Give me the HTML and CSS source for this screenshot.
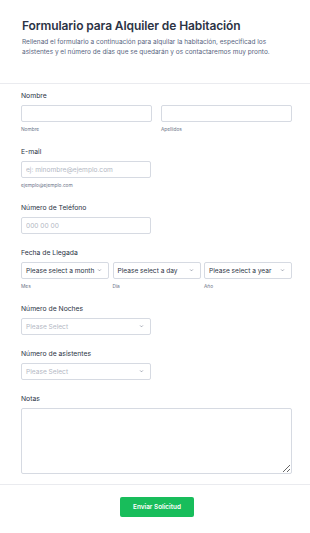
FILE: index.html
```html
<!DOCTYPE html>
<html>
  <head>
    <meta charset=utf-8>
    <title>Formulario para Alquiler de Habitación</title>
    <link rel="stylesheet" href="styles.css">
  </head>
  <body>
    <div id="form">
      <div class="header">
        <h1>Formulario para Alquiler de Habitación</h1>
        <p>Rellenad el formulario a continuación para alquilar la habitación, especificad los asistentes y el número de días que se quedarán y os contactaremos muy pronto.</p>
      </div>
      <div class="fields">
        <div class="field">
          <p class="label">Nombre</p>
          <div class="row">
            <div class="col">
              <input class="box" type="text">
              <p class="sub">Nombre</p>
            </div>
            <div class="col">
              <input class="box" type="text">
              <p class="sub">Apellidos</p>
            </div>
          </div>
        </div>
        <div class="field">
          <p class="label">E-mail</p>
          <div class="half">
            <input class="box" type="text" placeholder="ej: minombre@ejemplo.com">
            <p class="sub">ejemplo@ejemplo.com</p>
          </div>
        </div>
        <div class="field">
          <p class="label">Número de Teléfono</p>
          <div class="half">
            <input class="box" type="text" placeholder="000 00 00">
          </div>
        </div>
        <div class="field">
          <p class="label">Fecha de Llegada</p>
          <div class="row date">
            <div class="col">
              <div class="box select"><span>Please select a month</span><svg viewBox="0 0 10 6"><path d="M3 1.5l2 2 2-2"/></svg></div>
              <p class="sub">Mes</p>
            </div>
            <div class="col">
              <div class="box select"><span>Please select a day</span><svg viewBox="0 0 10 6"><path d="M3 1.5l2 2 2-2"/></svg></div>
              <p class="sub">Día</p>
            </div>
            <div class="col">
              <div class="box select"><span>Please select a year</span><svg viewBox="0 0 10 6"><path d="M3 1.5l2 2 2-2"/></svg></div>
              <p class="sub">Año</p>
            </div>
          </div>
        </div>
        <div class="field">
          <p class="label">Número de Noches</p>
          <div class="half">
            <div class="box select empty"><span>Please Select</span><svg viewBox="0 0 10 6"><path d="M3 1.5l2 2 2-2"/></svg></div>
          </div>
        </div>
        <div class="field">
          <p class="label">Número de asistentes</p>
          <div class="half">
            <div class="box select empty"><span>Please Select</span><svg viewBox="0 0 10 6"><path d="M3 1.5l2 2 2-2"/></svg></div>
          </div>
        </div>
        <div class="field last">
          <p class="label">Notas</p>
          <textarea class="notes"></textarea>
        </div>
      </div>
      <div class="footer">
        <button>Enviar Solicitud</button>
      </div>
    </div>
  </body>
</html>
```

FILE: styles.css
```css
body {
  margin: 0;
  background: #fff;
  font-family: Inter, "Noto Sans", sans-serif;
  color: #2c3345;
}

p {
  margin: 0;
}

.header {
  padding: 17px 22px 26px;
  border-bottom: 1px solid #eaebef;
}

.header h1 {
  margin: 0;
  font-size: 12px;
  line-height: 17px;
  font-weight: 600;
  letter-spacing: -0.1px;
  white-space: nowrap;
  color: #2c3345;
}

.header p {
  margin-top: 3px;
  font-size: 6.5px;
  line-height: 10px;
  color: #57647e;
}

.fields {
  padding: 7px 18px 0 21px;
}

.field {
  margin-bottom: 14px;
}

.field.last {
  margin-bottom: 10px;
}

.label {
  font-size: 6.8px;
  line-height: 10px;
  font-weight: 400;
  color: #2c3345;
  margin-bottom: 4px;
}

.row {
  display: flex;
  gap: 9px;
}

.row.date {
  gap: 3.5px;
}

.col {
  flex: 1;
  min-width: 0;
}

.half {
  width: 130px;
}

.box {
  display: block;
  box-sizing: border-box;
  width: 100%;
  height: 17px;
  margin: 0;
  border: 1px solid #d6dae2;
  border-radius: 2px;
  background: #fff;
  padding: 0 4px;
  font-family: Inter, sans-serif;
  font-size: 6.6px;
  color: #2c3345;
  outline: none;
}

.box::placeholder {
  color: #b3b8c4;
}

.select {
  display: flex;
  align-items: center;
  justify-content: space-between;
  white-space: nowrap;
  overflow: hidden;
}

.select.empty {
  color: #b3b8c4;
}

.select svg {
  width: 7px;
  height: 5px;
  flex: none;
  margin-right: 1px;
  fill: none;
  stroke: #8a90a0;
  stroke-width: 1.1;
}

.sub {
  margin-top: 4px;
  font-size: 4.8px;
  line-height: 7px;
  color: #6c7489;
}

.notes {
  display: block;
  box-sizing: border-box;
  width: 100%;
  height: 66px;
  margin: 0;
  border: 1px solid #d6dae2;
  border-radius: 2px;
  font-family: Inter, sans-serif;
  resize: both;
}

.footer {
  border-top: 1px solid #eaebef;
  padding: 12px 0;
  display: flex;
  justify-content: center;
}

button {
  margin-left: 4px;
  width: 74px;
  height: 20px;
  border: none;
  border-radius: 2px;
  background: #18bd5b;
  color: #fff;
  font-family: Inter, sans-serif;
  font-size: 6.4px;
  font-weight: 600;
}
```
